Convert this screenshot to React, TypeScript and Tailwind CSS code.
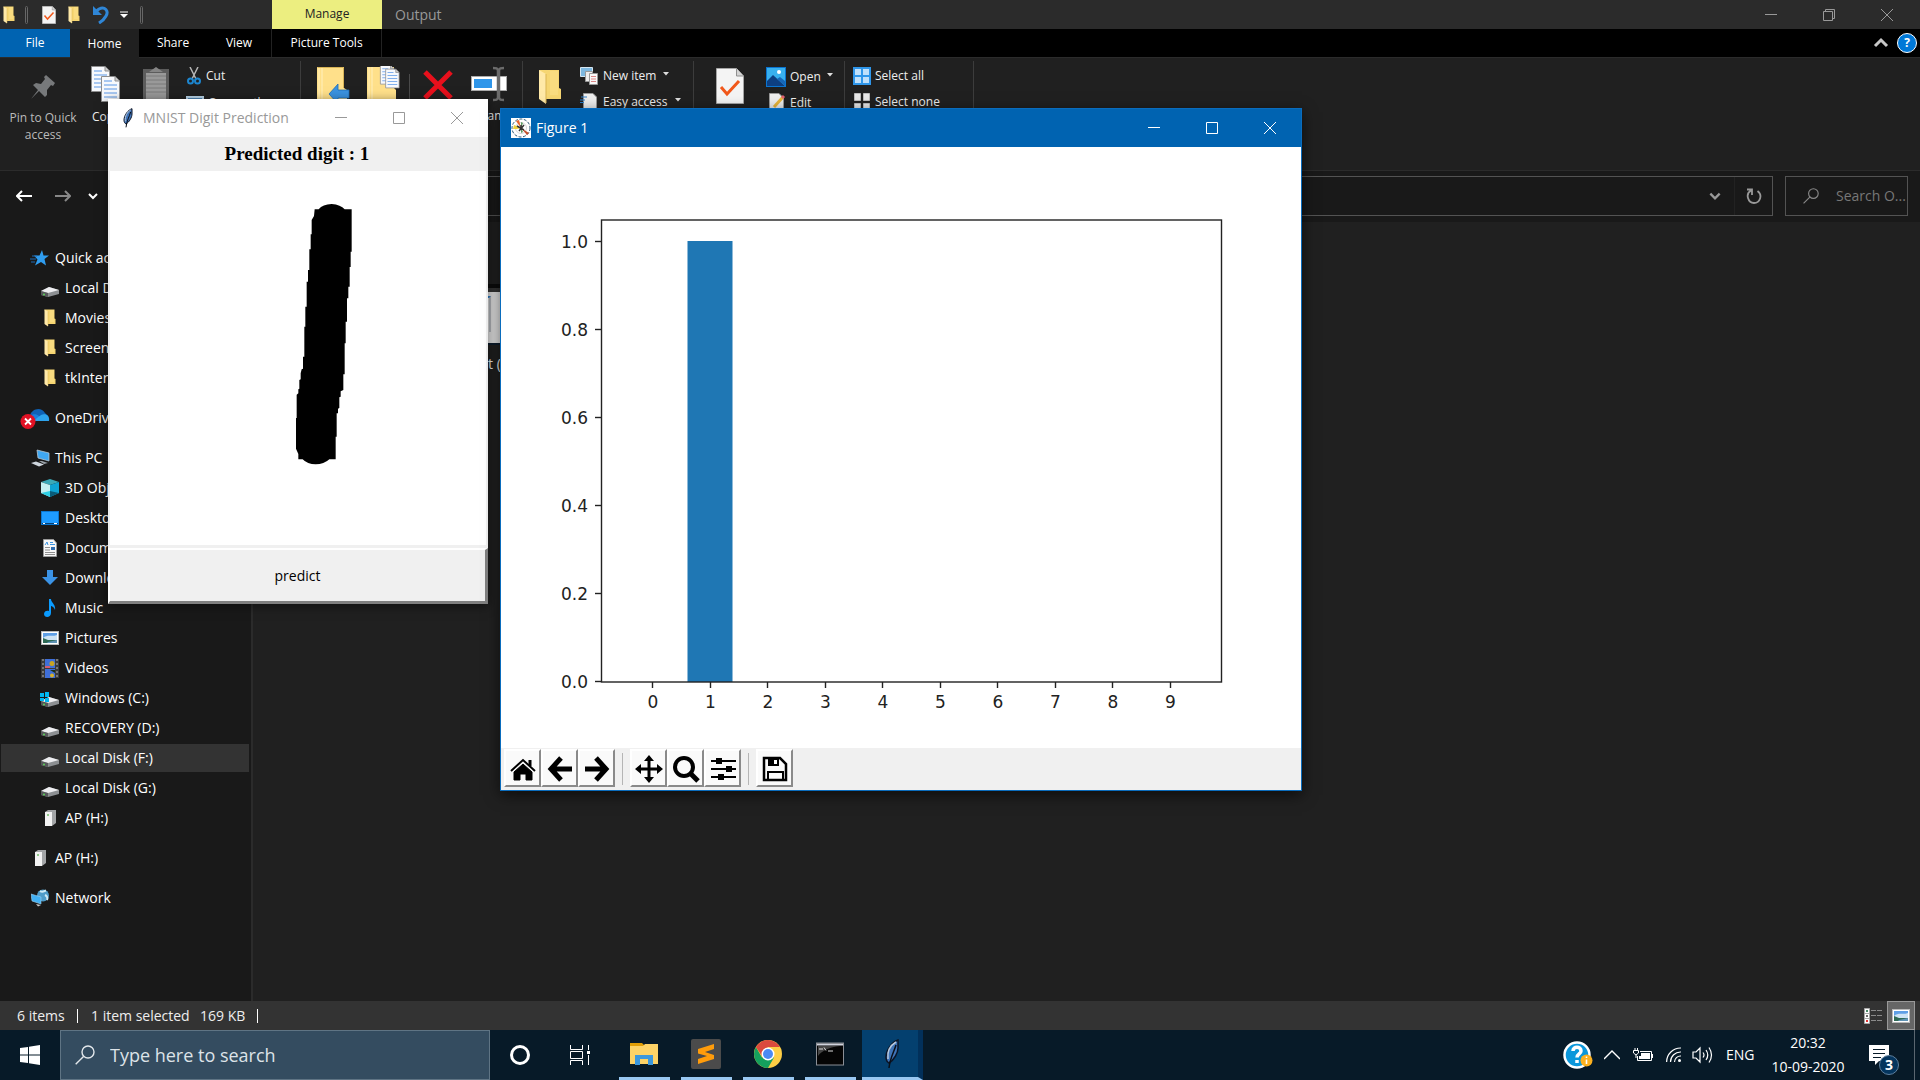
import type { ReactNode } from "react";

/* ---------- small drawings ---------- */

function Folder({ className = "" }: { className?: string }) {
  return (
    <svg viewBox="0 0 24 36" className={className} aria-hidden="true">
      <path d="M1 1H21V19L23 20V30H8Z" fill="#f6d672" />
      <path d="M12 2H20V26H12Z" fill="#fbe08a" opacity=".6" />
      <path d="M1 1L8 5V35L1 30Z" fill="#ffe9a8" />
      <path d="M8 5V34" stroke="#d9b452" strokeWidth="1" />
    </svg>
  );
}

function FolderWide({ children }: { children: ReactNode }) {
  return (
    <svg viewBox="0 0 34 40" className="h-10 w-[34px]" aria-hidden="true">
      <path d="M0 1H27V22L30 24V40H0Z" fill="#ffe08a" />
      <path d="M2 1V40M5 1V40" stroke="#fff0bd" strokeWidth="1" />
      <path d="M.5 1.5H26.5V22" fill="none" stroke="#d8b457" />
      {children}
    </svg>
  );
}

function CheckDoc({ className = "" }: { className?: string }) {
  return (
    <svg viewBox="0 0 28 36" className={className} aria-hidden="true">
      <path d="M.5.5H20.500L27.500 8V35.500H.5Z" fill="#f4f4f4" stroke="#a5a5a5" />
      <path d="M20.500.5V8H27.500" fill="#d4d4d4" stroke="#8f8f8f" />
      <path d="M5 19L11 26L23 13" fill="none" stroke="#f1581b" strokeWidth="3" />
    </svg>
  );
}

function Page({ x, y }: { x: number; y: number }) {
  return (
    <g transform={`translate(${x} ${y})`}>
      <path d="M.5.5H14L18.500 5V25.500H.5Z" fill="#f7f9fc" stroke="#8e8e8e" />
      <path d="M14 .5V5H18.500" fill="#ccc" stroke="#8e8e8e" />
      <path d="M3 5H11M3 9H16M3 13H16M3 17H16M3 21H16" stroke="#5b97e6" strokeWidth="1" />
    </g>
  );
}

function Feather({ className = "" }: { className?: string }) {
  return (
    <svg viewBox="0 0 16 30" className={className} aria-hidden="true">
      <path d="M14 1C8 3 2 11 2 18C2 21 3 23 5 24C10 21 14 14 14 9Z" fill="#3f74b8" stroke="#0c1526" strokeWidth="1.500" />
      <path d="M4 20C3 12 7 6 12 3" fill="none" stroke="#b9c9dd" strokeWidth="1.500" />
      <path d="M12 6C10 13 6 19 5 29" fill="none" stroke="#0a0f18" strokeWidth="1.500" />
    </svg>
  );
}

function Magnifier({ className = "" }: { className?: string }) {
  return (
    <svg viewBox="0 0 20 20" className={className} fill="none" stroke="currentColor" strokeWidth="1.400" aria-hidden="true">
      <circle cx="13" cy="7" r="6" />
      <path d="M8.500 11.500L.7 19.300" />
    </svg>
  );
}

function Chevron({ className = "", width = 2 }: { className?: string; width?: number }) {
  return (
    <svg viewBox="0 0 12 12" className={className} fill="none" stroke="currentColor" strokeWidth={width} aria-hidden="true">
      <path d="M2 4L6 8L10 4" />
    </svg>
  );
}

function Caret() {
  return (
    <svg viewBox="0 0 6 4" className="h-1 w-1.5" aria-hidden="true">
      <path d="M0 0H6L3 3.500Z" fill="#ddd" />
    </svg>
  );
}

function Drive({ windows = false }: { windows?: boolean }) {
  return (
    <svg viewBox="0 0 20 16" className="mt-1 h-4 w-5" aria-hidden="true">
      <path d="M1 9L9 5L19 8V12L8 15L1 13Z" fill="#8c8f92" />
      <path d="M1 9L9 5L19 8L8 11Z" fill="#ededf0" />
      <path d="M1 9L8 11V15L1 13Z" fill="#55585a" />
      <circle cx="4" cy="12.500" r="1" fill="#5fd35a" />
      {windows && (
        <g fill="#00b7f0">
          <rect x="0" y="1" width="4" height="4" />
          <rect x="5" y="0" width="4" height="5" />
          <rect x="0" y="6" width="4" height="3" />
          <rect x="5" y="6" width="4" height="4" />
        </g>
      )}
    </svg>
  );
}

function SmallFolder() {
  return <Folder className="h-[18px] w-3" />;
}

function Tower() {
  return (
    <svg viewBox="0 0 12 16" className="h-4 w-3" aria-hidden="true">
      <path d="M1 2L4 0H12V13L8 16H1Z" fill="#a3a5a7" />
      <path d="M1 2H8V16H1Z" fill="#f2f2f2" />
      <circle cx="4" cy="5" r="1" fill="#6fbf6a" />
    </svg>
  );
}

function PictureIcon() {
  return (
    <svg viewBox="0 0 18 14" className="h-3.5 w-[18px]" aria-hidden="true">
      <rect x=".5" y=".5" width="17" height="13" fill="#fff" stroke="#b9b9b9" />
      <rect x="2" y="2" width="14" height="10" fill="#5f9fe6" />
      <path d="M2 7C6 3 11 6 16 4V9H2Z" fill="#cfe4f5" />
      <path d="M2 7L7 9L16 9V12H2Z" fill="#2f6a55" />
      <path d="M7 11L16 9V12H6Z" fill="#5f93b5" />
    </svg>
  );
}

const sideIcons: Record<string, ReactNode> = {
  star: (
    <svg viewBox="0 0 20 16" className="h-4 w-5" aria-hidden="true">
      <path d="M12 0L13.500 5.500H19L14.500 9L16 15.500L11 12L5 15.500L7.500 9.500L4 5.500H9.500Z" fill="#2f9df0" />
      <path d="M2 6H7M0 9H6M1 12H5" stroke="#1f6db5" />
    </svg>
  ),
  cloud: (
    <svg viewBox="0 0 30 22" className="-ml-2.5 h-[22px] w-[30px]" aria-hidden="true">
      <path d="M10 9C11 2 21 -1 25 6L28 9L20 13H10Z" fill="#0f62b5" />
      <path d="M9 14C8 8 15 5 19 9L25 14H9Z" fill="#1a7fdb" />
      <path d="M13 14L21 8C26 6 30 9 29 14Z" fill="#2da3ec" />
      <circle cx="8" cy="14.500" r="7.500" fill="#e01124" />
      <path d="M5 11.500L11 17.500M11 11.500L5 17.500" stroke="#fff" strokeWidth="1.800" />
    </svg>
  ),
  pc: (
    <svg viewBox="0 0 20 18" className="h-[18px] w-5" aria-hidden="true">
      <path d="M7 1L19 4V12L8 9Z" fill="#3fa7f2" stroke="#b7c6d2" strokeWidth=".8" />
      <path d="M12 12L18 14L14 15L9 12Z" fill="#9aa1a8" />
      <path d="M1 14L6 12.500L14 15.500L9 17.500Z" fill="#cfd6de" />
    </svg>
  ),
  cube: (
    <svg viewBox="0 0 18 18" className="h-[18px] w-[18px]" aria-hidden="true">
      <path d="M9 0L18 3L9 6L0 3Z" fill="#3ba9b8" />
      <path d="M0 3L9 6V18L0 14Z" fill="#c5f0f2" />
      <path d="M9 6L18 3V14L9 18Z" fill="#0fa3d4" />
      <path d="M0 14L9 12L9 18Z" fill="#2fd0e6" />
      <path d="M9 12L18 14L9 18Z" fill="#0a5b78" />
    </svg>
  ),
  desktop: (
    <svg viewBox="0 0 18 14" className="h-3.5 w-[18px]" aria-hidden="true">
      <rect x=".5" y=".5" width="17" height="13" fill="#1e9bff" stroke="#0b76cf" />
      <path d="M1 12.500H17" stroke="#063e70" strokeWidth="1" />
      <path d="M2 12.500H4M13 12.500H16" stroke="#fff" strokeWidth="1" />
    </svg>
  ),
  doc: (
    <svg viewBox="0 0 14 18" className="h-[18px] w-3.5" aria-hidden="true">
      <path d="M.5.5H10.500L13.500 4V17.500H.5Z" fill="#f7f7f7" stroke="#9a9a9a" />
      <path d="M2 6L4 3L5 6M7 3.500H10M7 5.500H12" fill="none" stroke="#3b93e0" />
      <path d="M2 8.500H7M2 11H7M2 13.500H12M2 15.500H12" stroke="#8e8e8e" />
      <rect x="8" y="8" width="4" height="3" fill="#2f6db0" />
    </svg>
  ),
  download: (
    <svg viewBox="0 0 16 16" className="h-4 w-4" aria-hidden="true">
      <path d="M5 0H11V7H16L8 15L0 7H5Z" fill="#3b93e6" />
    </svg>
  ),
  music: (
    <svg viewBox="0 0 12 18" className="h-[18px] w-3" aria-hidden="true">
      <path d="M5 0H7C7 4 12 5 11 11C10 8 8 7 7 7V14C7 19 0 19 0 15C0 12 3 11 5 12Z" fill="#0a9bff" />
    </svg>
  ),
  picture: <PictureIcon />,
  video: (
    <svg viewBox="0 0 18 19" className="h-[19px] w-[18px]" aria-hidden="true">
      <rect width="18" height="19" fill="#3a3a3a" />
      <path d="M2 0V19M16 0V19" stroke="#8a8a8a" strokeDasharray="2 2" strokeWidth="1.500" />
      <rect x="4" y="0" width="10" height="9" fill="#3f6fd8" />
      <rect x="4" y="10" width="10" height="9" fill="#3f6fd8" />
      <circle cx="11" cy="4.500" r="2.500" fill="#c9a420" />
      <path d="M4 7H9V9H4Z" fill="#d05c73" />
      <path d="M9 11H14V14Z" fill="#1c2f16" />
      <circle cx="11" cy="16.500" r="2" fill="#d6b12b" />
    </svg>
  ),
  windrive: <Drive windows />,
  drive: <Drive />,
  folder: <SmallFolder />,
  tower: <Tower />,
  network: (
    <svg viewBox="0 0 18 18" className="h-[18px] w-[18px]" aria-hidden="true">
      <circle cx="12" cy="6.500" r="6" fill="#4f9cc8" />
      <path d="M9 2C12 4 13 2 15 1.500M14 6C16 7 17 9 16 11" stroke="#cfeaf5" strokeWidth="2" fill="none" />
      <path d="M0 5L10 8V15L1 12Z" fill="#41b1f5" stroke="#9fd0ee" strokeWidth=".6" />
      <path d="M5 15L10 16L7 17.500Z" fill="#c9c9c9" />
    </svg>
  ),
};

/* ---------- explorer window ---------- */

function WindowButtons({ restore = false, className = "" }: { restore?: boolean; className?: string }) {
  return (
    <div className={`flex ${className}`}>
      <button aria-label="Minimize" className="flex w-[58px] items-center justify-center">
        <svg viewBox="0 0 12 12" className="h-3 w-3" stroke="currentColor"><path d="M0 5.500H12" /></svg>
      </button>
      <button aria-label={restore ? "Restore" : "Maximize"} className="flex w-[58px] items-center justify-center">
        <svg viewBox="0 0 12 12" className="h-3 w-3" fill="none" stroke="currentColor">
          {restore ? <path d="M.5 2.500H9.500V11.500H.5ZM2.500 2.500V.5H11.500V9.500H9.500" /> : <path d="M.5.5H11.500V11.500H.5Z" />}
        </svg>
      </button>
      <button aria-label="Close" className="flex w-[58px] items-center justify-center">
        <svg viewBox="0 0 12 12" className="h-3 w-3" stroke="currentColor"><path d="M0 0L12 12M12 0L0 12" /></svg>
      </button>
    </div>
  );
}

function TitleBar() {
  return (
    <header className="flex h-[29px] shrink-0 bg-[#2b2b2b] text-sm">
      <div className="flex w-[272px] items-center pl-[3px]">
        <Folder className="h-[18px] w-3" />
        <span className="ml-2.5 h-[18px] w-[3px] rounded-sm border border-[#666]" />
        <CheckDoc className="ml-3.5 h-[18px] w-3.5" />
        <Folder className="ml-3 h-[18px] w-3" />
        <svg viewBox="0 0 18 18" className="ml-3 h-[18px] w-[18px]" fill="none" aria-hidden="true">
          <path d="M3 6L7 3C13 0 17 5 14 10Q12 14 7 17" stroke="#2f86d6" strokeWidth="3" />
          <path d="M1 0V9H10Z" fill="#2f86d6" />
        </svg>
        <svg viewBox="0 0 8 8" className="ml-2.5 h-2 w-2" aria-hidden="true">
          <path d="M0 1H8" stroke="#fff" />
          <path d="M0 3H8L4 7Z" fill="#fff" />
        </svg>
        <span className="ml-3 h-[18px] w-[3px] rounded-sm border border-[#666]" />
      </div>
      <div className="w-[110px] bg-[#ecee80] text-center text-xs leading-[27px] text-[#222]">Manage</div>
      <h1 className="pl-[13px] leading-[29px] text-[#999]">Output</h1>
      <WindowButtons restore className="ml-auto pr-1 text-[#999]" />
    </header>
  );
}

function RibbonTabs() {
  return (
    <nav className="flex h-[29px] shrink-0 border-b border-[#2b2b2b] bg-black text-xs text-white">
      <button className="w-[70px] bg-[#0063b1]">File</button>
      <button className="-mb-px w-[69px] bg-[#202020]">Home</button>
      <button className="w-[68px]">Share</button>
      <button className="w-[64px]">View</button>
      <button className="w-[111px] border-x border-[#222]">Picture Tools</button>
      <div className="ml-auto flex items-center gap-[7px] pr-[3px]">
        <button aria-label="Collapse ribbon">
          <Chevron className="h-[18px] w-[18px] rotate-180 text-[#c8c8c8]" />
        </button>
        <button aria-label="Help" className="h-5 w-5 rounded-full border border-white bg-[#0078d7] font-bold leading-4">?</button>
      </div>
    </nav>
  );
}

function Ribbon() {
  const small = "flex h-[18px] items-center whitespace-nowrap";
  return (
    <section className="flex h-[113px] shrink-0 overflow-hidden border-b border-[#2b2b2b] bg-[#202020] pt-[3px] text-xs text-[#eee]">
      <div className="flex w-[301px] border-r border-[#3c3c3c]">
        <button className="flex w-[86px] flex-col items-center pt-[13px] leading-[17px] text-[#bbb]">
          <svg viewBox="0 0 26 26" className="mb-[9px] h-[26px] w-[26px]" aria-hidden="true">
            <path d="M16 1L25 9L23 12L21 11L17 16V21L15 23L9 17L2 24L1 25L8 16L3 11L6 9L11 10L15 5L14 3Z" fill="#77797b" />
          </svg>
          Pin to Quick access
        </button>
        <button className="ml-0.5 flex w-[36px] flex-col items-center pt-[5px]">
          <svg viewBox="0 0 32 38" className="mb-[5px] h-[38px] w-8" aria-hidden="true">
            <Page x={1} y={0} />
            <Page x={11} y={10} />
          </svg>
          Copy
        </button>
        <button aria-label="Paste" className="ml-[18px] flex w-7 flex-col items-center pt-1.5">
          <svg viewBox="0 0 26 36" className="h-9 w-[26px]" aria-hidden="true">
            <path d="M0 2H26V36H0Z" fill="#5c5c5c" />
            <path d="M3 6H23V34H3Z" fill="#999" />
            <path d="M3 9H23M3 13H23M3 17H23M3 21H23M3 25H23" stroke="#7a7a7a" />
            <path d="M6 5L13 0L20 5Z" fill="#858585" />
          </svg>
        </button>
        <div className="ml-4 flex flex-col gap-[9px] pt-1.5">
          <button className={`${small} gap-1`}>
            <svg viewBox="0 0 16 18" className="h-[18px] w-4" fill="none" aria-hidden="true">
              <path d="M4 0L10 12M12 0L6 12" stroke="#b5b5b5" strokeWidth="1.500" />
              <circle cx="4.500" cy="14" r="2.500" stroke="#1d86cf" strokeWidth="2" />
              <circle cx="11.500" cy="14" r="2.500" stroke="#1d86cf" strokeWidth="2" />
            </svg>
            Cut
          </button>
          <button className={`${small} gap-1`}>
            <span className="h-3.5 w-[18px] border-2 border-[#b9d5ea] bg-[#4f86b5]" />
            Copy path
          </button>
        </div>
      </div>
      <div className="flex w-[222px] items-start border-r border-[#3c3c3c] pl-4 pt-[5px]">
        <button aria-label="Move to" className="w-[50px]">
          <FolderWide>
            <path d="M12 28L21 18V24H32V32H21V38Z" fill="#3b93e0" stroke="#1f6db5" strokeWidth=".8" />
          </FolderWide>
        </button>
        <button aria-label="Copy to" className="w-[42px]">
          <svg viewBox="0 0 34 40" className="h-10 w-[34px]" aria-hidden="true">
            <path d="M0 1H27V22L29 24V40H0Z" fill="#ffe08a" />
            <path d="M2 1V40M5 1V40" stroke="#fff0bd" />
            <g transform="translate(13 -1) scale(.75)"><Page x={0} y={0} /><Page x={7} y={5} /></g>
          </svg>
        </button>
        <span className="mt-2 h-20 w-px bg-[#4a4a4a]" />
        <button aria-label="Delete" className="ml-[13px] w-12 pt-1">
          <svg viewBox="0 0 30 30" className="h-[30px] w-[30px]" stroke="#e8101c" strokeWidth="5" aria-hidden="true">
            <path d="M2 2L28 28M28 2L2 28" />
          </svg>
        </button>
        <button className="flex w-9 flex-col items-center">
          <svg viewBox="0 0 36 36" className="mb-1.5 h-9 w-9" aria-hidden="true">
            <rect x=".5" y="10.500" width="35" height="14" fill="#fff" stroke="#aaa" />
            <rect x="3" y="13" width="18" height="9" fill="#2f96ea" />
            <path d="M22 2C25 2 27 2 27 5V31C27 34 25 34 22 34M33 2C30 2 28 2 28 5V31C28 34 30 34 33 34" fill="none" stroke="#6b6b6b" strokeWidth="2.500" />
          </svg>
          Rename
        </button>
      </div>
      <div className="flex w-[171px] border-r border-[#3c3c3c] pl-[15px]">
        <button aria-label="New folder" className="h-9 pt-2"><Folder className="h-9 w-6" /></button>
        <div className="ml-[18px] flex flex-col gap-2 pt-1.5">
          <button className={`${small} gap-[5px]`}>
            <svg viewBox="0 0 18 18" className="h-[18px] w-[18px]" aria-hidden="true">
              <path d="M.5.5H12.500V9.500H.5Z" fill="#7db8e0" stroke="#d6e6f1" />
              <path d="M5.500 4.500H12.500V14.500H5.500Z" fill="#eee" stroke="#999" />
              <path d="M9.500 6.500H17.500V17.500H9.500Z" fill="#fafafa" stroke="#999" />
              <path d="M11 9.500H16M11 12H16M11 14.500H16" stroke="#d88" />
            </svg>
            New item <span className="pb-1 pl-0.5"><Caret /></span>
          </button>
          <button className={`${small} gap-[5px]`}>
            <svg viewBox="0 0 18 18" className="h-[18px] w-[18px]" aria-hidden="true">
              <path d="M3.500.5H13L16.500 4V17.500H3.500Z" fill="#eee" stroke="#999" />
              <path d="M1 4H7M0 7H5M0 9.500H4" stroke="#2f7fc8" />
            </svg>
            Easy access <span className="pb-1 pl-0.5"><Caret /></span>
          </button>
        </div>
      </div>
      <div className="flex w-[151px] border-r border-[#3c3c3c] pl-[22px] pt-[7px]">
        <button aria-label="Properties" className="h-9"><CheckDoc className="h-9 w-7" /></button>
        <div className="ml-[22px] flex flex-col gap-2">
          <button className={`${small} gap-1`}>
            <svg viewBox="0 0 20 20" className="h-5 w-5" aria-hidden="true">
              <rect x=".5" y=".5" width="19" height="19" fill="#38b0ee" stroke="#0a74d1" />
              <circle cx="13" cy="5" r="2" fill="#fff" />
              <path d="M1 14L7 8L19 19H1Z" fill="#0d3f82" />
              <path d="M11 12L14 10L19 14V19Z" fill="#1667b8" />
            </svg>
            Open <span className="pb-1 pl-0.5"><Caret /></span>
          </button>
          <button className={`${small} gap-1`}>
            <svg viewBox="0 0 20 20" className="h-5 w-5" aria-hidden="true">
              <path d="M3.500.5H13L17.500 5V19.500H3.500Z" fill="#eee" stroke="#999" />
              <path d="M8 14L17 4" stroke="#e8b53a" strokeWidth="3" />
              <path d="M16 5L18 3" stroke="#e06070" strokeWidth="3" />
            </svg>
            Edit
          </button>
        </div>
      </div>
      <div className="flex w-[129px] flex-col gap-2 border-r border-[#3c3c3c] pl-2 pt-1.5">
        <button className={`${small} gap-1`}>
          <svg viewBox="0 0 18 18" className="h-[18px] w-[18px]" aria-hidden="true">
            <rect width="18" height="18" fill="#2f96ea" />
            <path d="M2 2H8V8H2ZM10 2H16V8H10ZM2 10H8V16H2ZM10 10H16V16H10Z" fill="#bfe0fb" />
          </svg>
          Select all
        </button>
        <button className={`${small} gap-1`}>
          <svg viewBox="0 0 18 18" className="h-[18px] w-[18px]" aria-hidden="true">
            <path d="M1.500.5H7.500V7.500H1.500ZM10.500.5H16.500V7.500H10.500ZM1.500 10.500H7.500V17.500H1.500ZM10.500 10.500H16.500V17.500H10.500Z" fill="#e8e8e8" stroke="#bbb" />
          </svg>
          Select none
        </button>
      </div>
    </section>
  );
}

function AddressBar() {
  return (
    <section className="flex h-[51px] shrink-0 items-start gap-3 bg-[#191919] pr-3 pt-[5px] text-sm">
      <div className="flex h-10 w-[108px] items-center pl-4">
        <button aria-label="Back" className="text-white">
          <svg viewBox="0 0 16 12" className="h-3 w-4" fill="none" stroke="currentColor" strokeWidth="2"><path d="M1 6H16M6 1L1 6L6 11" /></svg>
        </button>
        <button aria-label="Forward" className="ml-[23px] text-[#888]">
          <svg viewBox="0 0 16 12" className="h-3 w-4" fill="none" stroke="currentColor" strokeWidth="2"><path d="M0 6H15M10 1L15 6L10 11" /></svg>
        </button>
        <button aria-label="Recent locations" className="ml-4 text-white"><Chevron className="h-3 w-3" /></button>
      </div>
      <div className="flex h-10 flex-1 items-center justify-end border border-[#535353] text-[#999]">
        <button aria-label="Previous locations" className="flex h-full items-center border-r border-[#222] pr-3"><Chevron className="h-3.5 w-3.5" /></button>
        <button aria-label="Refresh" className="flex w-[37px] justify-center">
          <svg viewBox="0 0 16 16" className="h-4 w-4" fill="none" stroke="currentColor" strokeWidth="1.800">
            <path d="M5 2.500C-1 6 2 15 8 15C14 15 17 7 11.500 3M1 1.500H6V7" />
          </svg>
        </button>
      </div>
      <label className="flex h-10 w-[123px] items-center overflow-hidden border border-[#535353] pl-[17px] text-[#8a8a8a]">
        <Magnifier className="h-4 w-4 shrink-0" />
        <input aria-label="Search Output" placeholder="Search O..." className="ml-[17px] w-[72px] bg-transparent text-sm placeholder:text-[#777]" />
      </label>
    </section>
  );
}

type SideItem = { label: string; icon: string; child?: boolean; gap?: boolean; selected?: boolean };

const sideItems: SideItem[] = [
  { label: "Quick access", icon: "star" },
  { label: "Local Disk (F:)", icon: "drive", child: true },
  { label: "Movies", icon: "folder", child: true },
  { label: "Screenshots", icon: "folder", child: true },
  { label: "tkInter_", icon: "folder", child: true },
  { label: "OneDrive", icon: "cloud", gap: true },
  { label: "This PC", icon: "pc", gap: true },
  { label: "3D Objects", icon: "cube", child: true },
  { label: "Desktop", icon: "desktop", child: true },
  { label: "Documents", icon: "doc", child: true },
  { label: "Downloads", icon: "download", child: true },
  { label: "Music", icon: "music", child: true },
  { label: "Pictures", icon: "picture", child: true },
  { label: "Videos", icon: "video", child: true },
  { label: "Windows (C:)", icon: "windrive", child: true },
  { label: "RECOVERY (D:)", icon: "drive", child: true },
  { label: "Local Disk (F:)", icon: "drive", child: true, selected: true },
  { label: "Local Disk (G:)", icon: "drive", child: true },
  { label: "AP (H:)", icon: "tower", child: true },
  { label: "AP (H:)", icon: "tower", gap: true },
  { label: "Network", icon: "network", gap: true },
];

function Sidebar() {
  return (
    <aside className="w-[253px] shrink-0 border-r-2 border-[#2b2b2b] bg-[#191919] pt-[21px] text-sm text-white">
      <ul>
        {sideItems.map((item, i) => (
          <li key={i} className={item.gap ? "pt-2.5" : ""}>
            <a
              href="#"
              className={`ml-px flex h-[30px] items-center border-b border-t border-transparent bg-clip-padding ${item.child ? "pl-[39px]" : "pl-[29px]"} ${item.selected ? "mr-0.5 bg-[#333]" : ""}`}
            >
              <span className="flex w-5 justify-center">{sideIcons[item.icon]}</span>
              <span className="ml-[5px] whitespace-nowrap">{item.label}</span>
            </a>
          </li>
        ))}
      </ul>
    </aside>
  );
}

function FileArea() {
  return (
    <main className="flex-1 overflow-hidden bg-[#202020] pl-[134px] pt-[62px] text-sm">
      <figure className="w-[132px]">
        <div className="border-b-2 border-t-4 border-b-[#0c1c2c] border-t-[#0c0c0c] bg-[#e4e4e4]">
          <div className="h-[55px] border-t-4 border-[#333] pl-[98px]">
            <div className="mt-1 h-9 w-1.5 border-r-2 border-t-2 border-r-[#b5b8bd] border-t-[#2f7fc8]" />
          </div>
        </div>
        <figcaption className="pr-1.5 pt-[9px] text-right text-[#eee]">Screenshot (1)</figcaption>
      </figure>
    </main>
  );
}

function StatusBar() {
  return (
    <footer className="flex h-[29px] shrink-0 items-center bg-[#333] pl-[17px] pr-[5px] text-sm text-[#eee]">
      <span className="w-[60px]">6 items</span>
      <span className="h-3.5 w-px bg-white" />
      <span className="ml-[13px] w-[109px]">1 item selected</span>
      <span className="w-[57px]">169 KB</span>
      <span className="h-3.5 w-px bg-white" />
      <button aria-label="Details view" className="ml-auto mr-[5px]">
        <svg viewBox="0 0 18 16" className="h-4 w-[18px]" aria-hidden="true">
          <path d="M.5.5H5.500V15.500H.5ZM.5 5.500H5.500M.5 10.500H5.500" fill="#fff" stroke="#aaa" />
          <rect x="2" y="2" width="2" height="2" fill="#4b8a6a" />
          <rect x="2" y="7" width="2" height="2" fill="#6a6a6a" />
          <rect x="2" y="12" width="2" height="2" fill="#d33" />
          <path d="M7 2.500H12M13 2.500H18M7 7.500H12M13 7.500H18M7 12.500H12M13 12.500H18" stroke="#8a8a8a" />
        </svg>
      </button>
      <button aria-label="Large icons view" className="flex h-[29px] w-7 items-center justify-center border border-[#999] bg-[#666]"><PictureIcon /></button>
    </footer>
  );
}

/* ---------- floating windows ---------- */

function DigitWindow() {
  return (
    <section className="absolute left-[108px] top-[99px] flex w-[380px] flex-col bg-[#f0f0f0] shadow-[0_2px_10px_rgba(0,0,0,.5)]">
      <header className="flex h-[38px] items-center bg-white pl-3.5 text-sm text-[#999]">
        <Feather className="h-5 w-3" />
        <h2 className="ml-[9px]">MNIST Digit Prediction</h2>
        <WindowButtons className="ml-auto h-full pr-0.5" />
      </header>
      <p className="h-[34px] pr-0.5 text-center font-['Liberation_Serif'] text-[19px] font-bold leading-[33px] text-black">Predicted digit : 1</p>
      <div className="mx-0.5 bg-white">
        <svg viewBox="-480 -27 1128 1122" className="block w-full" role="img" aria-label="Drawn digit">
          <path
            d="M134 88H146Q158 73 185 72Q212 74 224 88H245V215H242V261H239V320H235V355H231V425H227V490H224V583H220V630L212 634V650L208 652V684L204 686V700H200V770H197V838H178Q162 853 137 853Q112 853 98 838H85V822L78 806V714H80V644L85 640V628L88 626V600L92 598V580L95 568L99 566V530H103V440H106V380H110V305H114V270H118V208H122V163H125V120L132 108Z"
            fill="#000"
          />
        </svg>
      </div>
      <button className="mt-[3px] h-14 border-b-[3px] border-l-2 border-r-[3px] border-t-2 border-b-[#808080] border-l-white border-r-[#808080] border-t-white text-sm text-black">
        predict
      </button>
    </section>
  );
}

const probabilities = [0, 1, 0, 0, 0, 0, 0, 0, 0, 0];
const yTicks = ["0.0", "0.2", "0.4", "0.6", "0.8", "1.0"];

function Chart() {
  return (
    <svg viewBox="0 0 800 601" className="block w-full bg-white font-['DejaVu_Sans']" fontSize="17" fill="#222" role="img" aria-label="Digit probabilities">
      {probabilities.map((p, i) => (
        <rect key={i} x={129 + i * 57.5} y={535 - p * 441} width="45" height={p * 441} fill="#1f77b4" />
      ))}
      <rect x="100.500" y="73" width="620" height="462" fill="none" stroke="#222" strokeWidth="1.400" />
      {yTicks.map((t, i) => (
        <g key={t}>
          <path d={`M94 ${Math.round(534 - i * 88) + 0.5}H100`} stroke="#222" strokeWidth="1.400" />
          <text x="87" y={541 - i * 88} textAnchor="end">{t}</text>
        </g>
      ))}
      {probabilities.map((_, i) => (
        <g key={i}>
          <path d={`M${Math.round(151 + i * 57.5) + 0.5} 535V541`} stroke="#222" strokeWidth="1.400" />
          <text x={152 + i * 57.5} y="561" textAnchor="middle">{i}</text>
        </g>
      ))}
    </svg>
  );
}

function ToolButton({ label, children }: { label: string; children: ReactNode }) {
  return (
    <button aria-label={label} className="flex h-[38px] w-[37px] items-center justify-center border-2 border-b-[#8a8a8a] border-l-white border-r-[#8a8a8a] border-t-white bg-[#fafafa] pt-0.5">
      <svg viewBox="0 0 30 30" className="h-[30px] w-[30px]" fill="none" stroke="#000" aria-hidden="true">{children}</svg>
    </button>
  );
}

function FigureWindow() {
  return (
    <section className="absolute left-[500px] top-[108px] flex w-[802px] flex-col border border-[#0a6cbd] bg-[#f0f0f0] shadow-[0_4px_14px_rgba(0,0,0,.6)]">
      <header className="flex h-[38px] items-center bg-[#0063b1] pl-2.5 text-sm text-white">
        <svg viewBox="0 0 20 20" className="h-5 w-5" aria-hidden="true">
          <rect width="20" height="20" fill="#fff" />
          <circle cx="10" cy="10" r="9" fill="none" stroke="#2b5775" strokeDasharray="3 1.500" />
          <circle cx="10" cy="10" r="5.500" fill="none" stroke="#bbb" strokeWidth=".6" />
          <path d="M10 10L5 3L8 2Z" fill="#e8622a" />
          <path d="M10 10L3 7L2 11L6 11Z" fill="#eed03a" />
          <path d="M10 10L18 15L16 17Z" fill="#c4502a" />
          <path d="M10 10L12 5L10 4ZM10 10L10 15L12 14Z" fill="#5b9c62" />
          <path d="M6 8L13 12M13 7L8 13M10 7V12" stroke="#333" strokeWidth="1.500" />
        </svg>
        <h2 className="ml-[5px]">Figure 1</h2>
        <WindowButtons className="ml-auto h-full pr-0.5" />
      </header>
      <Chart />
      <div className="flex h-[42px] items-start pl-[3px] pt-px">
        <ToolButton label="Home">
          <path d="M3 17L15 6L27 17" strokeWidth="2" />
          <path d="M6 18L15 10L24 18V26H18V20H12V26H6Z" fill="#000" strokeWidth="1" />
          <path d="M22 6V12" strokeWidth="3" />
        </ToolButton>
        <ToolButton label="Back"><path d="M27 15H7M16 4L6 15L16 26" strokeWidth="5" /></ToolButton>
        <ToolButton label="Forward"><path d="M3 15H23M14 4L24 15L14 26" strokeWidth="5" /></ToolButton>
        <span className="mx-[7px] mt-1 h-8 w-px bg-[#b5b5b5]" />
        <ToolButton label="Pan">
          <path d="M15 4V26M4 15H26" strokeWidth="3" />
          <path d="M15 1L20 7H10ZM15 29L10 23H20ZM1 15L7 10V20ZM29 15L23 20V10Z" fill="#000" stroke="none" />
        </ToolButton>
        <ToolButton label="Zoom">
          <circle cx="13" cy="13" r="9" strokeWidth="4" />
          <path d="M19 19L27 27" strokeWidth="5" />
        </ToolButton>
        <ToolButton label="Configure subplots">
          <path d="M3 7H28M3 15H28M3 23H28" strokeWidth="2" />
          <path d="M8 4H14V10H8ZM18 12H24V18H18ZM10 20H16V26H10Z" fill="#000" stroke="none" />
        </ToolButton>
        <span className="mx-[7px] mt-1 h-8 w-px bg-[#b5b5b5]" />
        <ToolButton label="Save">
          <path d="M4 4H20L26 10V26H4Z" strokeWidth="2.500" />
          <path d="M8 26V18H23V26" strokeWidth="2" />
          <path d="M8 4H19V12H8Z" fill="#000" stroke="none" />
          <path d="M14 6H17V10H14Z" fill="#fff" stroke="none" />
        </ToolButton>
      </div>
    </section>
  );
}

/* ---------- taskbar ---------- */

function TaskApp({ label, children }: { label: string; children: ReactNode }) {
  return (
    <button aria-label={label} className="flex w-[51px] items-center justify-center border-b-[3px] border-[#99c8f2] pr-0.5">{children}</button>
  );
}

function Taskbar() {
  return (
    <footer className="flex h-[50px] shrink-0 bg-[#071a28] text-sm text-white">
      <button aria-label="Start" className="flex w-[60px] items-center justify-center">
        <svg viewBox="0 0 20 20" className="h-5 w-5" fill="#fff"><path d="M0 3L8 2V9.500H0ZM9 1.800L20 0V9.500H9ZM0 10.500H8V18L0 17ZM9 10.500H20V20L9 18.200Z" /></svg>
      </button>
      <label className="flex w-[430px] items-center border border-[#5f7484] bg-[#344c60] pl-3.5 text-[#e3e8ec]">
        <Magnifier className="h-5 w-5" />
        <input aria-label="Type here to search" placeholder="Type here to search" className="ml-[15px] w-72 bg-transparent text-lg placeholder:text-[#dde3e8]" />
      </label>
      <button aria-label="Cortana" className="flex w-[60px] items-center justify-center">
        <span className="h-5 w-5 rounded-full border-[3px] border-white" />
      </button>
      <button aria-label="Task view" className="flex w-[60px] items-center justify-center">
        <svg viewBox="0 0 22 20" className="h-5 w-[22px]" fill="none" stroke="#fff">
          <path d="M1.500 0V4.500H13.500V0M1.500 20V15.500H13.500V20M1.500 6.500H13.500V13.500H1.500ZM19.500 0V5M19.500 10V20" />
          <path d="M18 6H21V9H18Z" fill="#fff" stroke="none" />
        </svg>
      </button>
      <div className="ml-[9px] flex gap-[11px]">
        <TaskApp label="File Explorer">
          <svg viewBox="0 0 28 24" className="h-6 w-7">
            <path d="M0 1H12L14 3V6H0Z" fill="#e19e06" />
            <path d="M0 4H13L15 2H28V22H0Z" fill="#fdd367" />
            <path d="M5 13H23V23H18V17H10V23H5Z" fill="#3c98dd" />
          </svg>
        </TaskApp>
        <TaskApp label="Sublime Text">
          <svg viewBox="0 0 30 30" className="h-[30px] w-[30px]">
            <rect width="30" height="30" rx="2" fill="#4b4b4b" />
            <path d="M7 10L23 5V10L14 13L23 16V20L7 25V20L16 17L7 14.500Z" fill="#ff9c0b" />
          </svg>
        </TaskApp>
        <TaskApp label="Google Chrome">
          <svg viewBox="0 0 28 28" className="h-7 w-7">
            <circle cx="14" cy="14" r="14" fill="#fdce45" />
            <path d="M1.900 7A14 14 0 0 0 14 28L20 17.500L8 17.500Z" fill="#15a05d" />
            <path d="M1.900 7A14 14 0 0 1 26.100 7H14L8 16Z" fill="#db4a3d" />
            <circle cx="14" cy="14" r="6.500" fill="#fff" />
            <circle cx="14" cy="14" r="5" fill="#4a8af4" />
          </svg>
        </TaskApp>
        <TaskApp label="Command Prompt">
          <svg viewBox="0 0 28 24" className="h-6 w-7">
            <rect x=".5" y="1" width="27" height="22" fill="#050505" stroke="#8b8f96" />
            <path d="M1 2.500H27" stroke="#cfd3dc" strokeWidth="2" />
            <path d="M2 4H24C14 5 5 9 2 14Z" fill="#444" />
            <path d="M4 6V8M6 6V8M8 5.500L10 8.500M12 9H17" stroke="#ddd" />
          </svg>
        </TaskApp>
      </div>
      <button aria-label="Python window" className="ml-1.5 flex w-[61px] items-center justify-center border-b-[3px] border-r-[5px] border-b-[#99c8f2] border-r-[#02305a] bg-[#04406f] pl-1">
        <Feather className="h-[30px] w-4" />
      </button>
      <div className="ml-auto flex items-center">
        <svg viewBox="0 0 30 28" className="h-7 w-[30px]" aria-hidden="true">
          <circle cx="14" cy="14" r="12.500" fill="#0b97db" stroke="#fff" strokeWidth="2.500" />
          <path d="M10 10C10 5 18 5 18 10C18 13 14 13 14 16.500M14 19V22" fill="none" stroke="#fff" strokeWidth="3.500" />
          <circle cx="23.500" cy="19.500" r="6" fill="#fbb01f" />
          <path d="M23.500 18.500V23M23.500 15.500V17" stroke="#fff" strokeWidth="1.600" />
        </svg>
        <button aria-label="Show hidden icons" className="ml-[11px]">
          <svg viewBox="0 0 16 10" className="h-2.5 w-4" fill="none" stroke="#fff" strokeWidth="1.400"><path d="M0 9L8 1L16 9" /></svg>
        </button>
        <svg viewBox="0 0 20 14" className="ml-[13px] h-3.5 w-5" aria-hidden="true" fill="none" stroke="#fff">
          <path d="M7 3.500H18.500V12.500H4.500V8M19.500 6V10M2 0V2M4.500 0V2M.5 2.500H5.500V5L3 7L.5 5ZM3 7V10" />
          <path d="M8 5H17V11H6V8H8Z" fill="#fff" stroke="none" />
        </svg>
        <svg viewBox="0 0 16 16" className="ml-[13px] h-4 w-4" aria-hidden="true" fill="none" stroke="#fff" strokeWidth="1.200">
          <path d="M.6 15A14 14 0 0 1 15 1M4.500 15A10 10 0 0 1 15 5M8.500 15A6 6 0 0 1 15 9" />
          <circle cx="13.500" cy="13.500" r="1.500" fill="#fff" stroke="none" />
        </svg>
        <svg viewBox="0 0 21 18" className="ml-2.5 h-[18px] w-[21px]" aria-hidden="true" fill="none" stroke="#fff" strokeWidth="1.200">
          <path d="M1 6H4L8 2V16L4 12H1ZM11 6.500Q13 9 11 11.500M14 4Q17.500 9 14 14M17 1.500Q22 9 17 16.500" />
        </svg>
        <span className="ml-[13px] w-[43px]">ENG</span>
        <time className="w-[78px] text-center leading-6">20:32<br />10-09-2020</time>
        <button aria-label="Notifications, 3 new" className="relative ml-[22px]">
          <svg viewBox="0 0 20 20" className="h-5 w-5">
            <path d="M0 0H20V16H10L6 20V16H0Z" fill="#fff" />
            <path d="M4 4.500H16M4 8.500H16M4 12.500H12" stroke="#071a28" />
          </svg>
          <span className="absolute -bottom-2.5 -right-2.5 h-5 w-5 rounded-full border border-[#5e7f9d] bg-[#04355e] text-center text-sm font-bold leading-[18px]">3</span>
        </button>
        <span className="ml-[25px] mr-[5px] h-[50px] w-px bg-[#5a6670]" />
      </div>
    </footer>
  );
}

export default function App() {
  return (
    <div className="relative flex min-h-screen w-full flex-col overflow-hidden bg-[#202020] font-['Open_Sans',sans-serif]">
      <TitleBar />
      <RibbonTabs />
      <Ribbon />
      <AddressBar />
      <div className="flex flex-1">
        <Sidebar />
        <FileArea />
      </div>
      <StatusBar />
      <Taskbar />
      <DigitWindow />
      <FigureWindow />
    </div>
  );
}
